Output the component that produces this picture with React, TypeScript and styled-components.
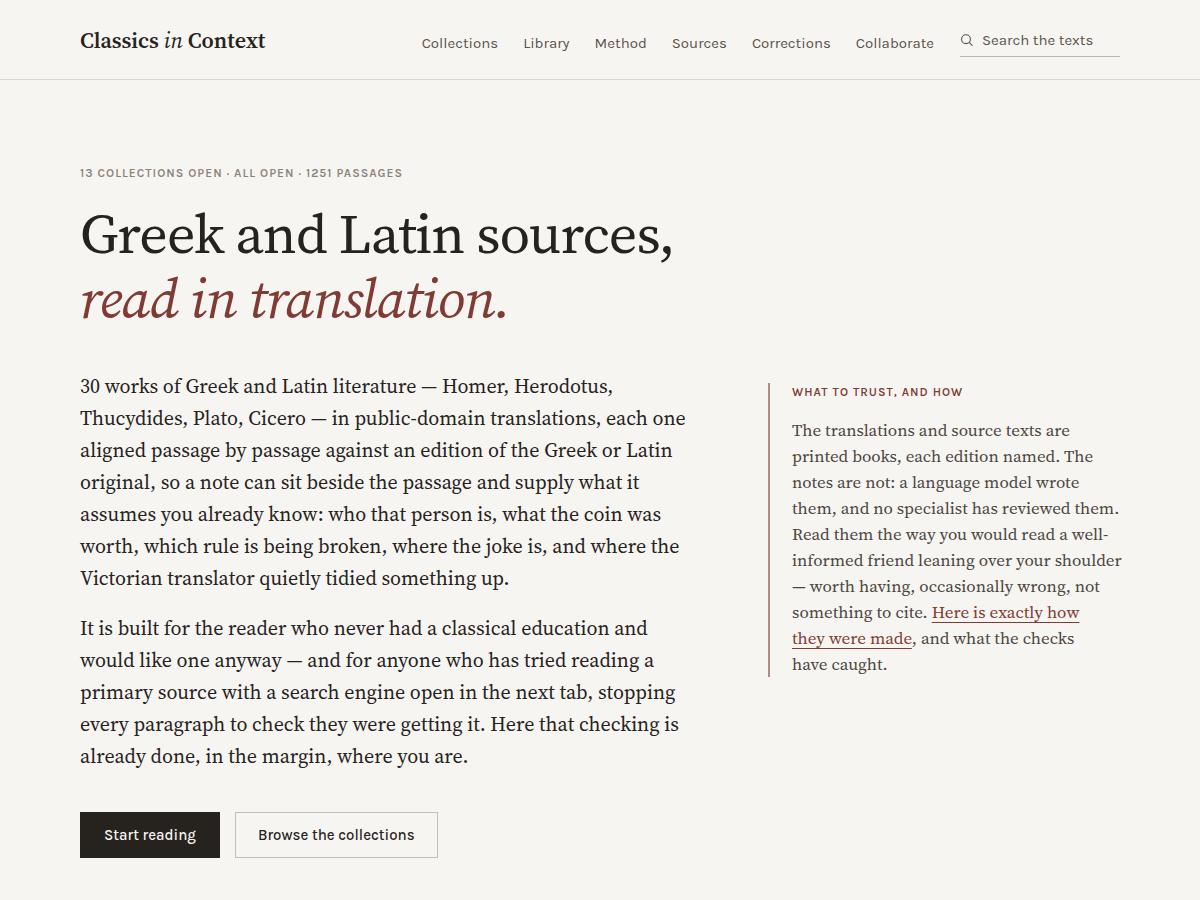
import React from "react";
import styled, { createGlobalStyle } from "styled-components";

const serif = '"Source Serif 4", "Liberation Serif", serif';
const sans = 'Karla, "Liberation Sans", sans-serif';

const ink = "#26221d";
const muted = "#5a534c";
const accent = "#7f3b34";
const paper = "#f7f5f1";

const GlobalStyle = createGlobalStyle`
  *, *::before, *::after { box-sizing: border-box; }
  body {
    margin: 0;
    background: ${paper};
    color: ${ink};
    font-family: ${serif};
  }
`;

const Header = styled.header`
  display: flex;
  align-items: center;
  justify-content: space-between;
  gap: 24px;
  padding: 24px 80px 22px;
  border-bottom: 1px solid #d9d5cf;
`;

const Brand = styled.a`
  padding-bottom: 2px;
  color: ${ink};
  font-size: 22px;
  line-height: 30px;
  font-weight: 600;
  text-decoration: none;
  white-space: nowrap;

  em {
    font-weight: 400;
  }
`;

const HeaderTools = styled.div`
  display: flex;
  align-items: center;
  gap: 26px;
`;

const Nav = styled.nav`
  display: flex;
  gap: 25px;
`;

const NavLink = styled.a`
  color: ${muted};
  font-family: ${sans};
  font-size: 15px;
  line-height: 24px;
  padding-top: 4px;
  text-decoration: none;
`;

const Search = styled.label`
  display: flex;
  align-items: center;
  gap: 8px;
  width: 160px;
  height: 33px;
  border-bottom: 1px solid #bdb9b3;
  color: ${muted};
`;

const SearchInput = styled.input`
  flex: 1;
  min-width: 0;
  padding: 0;
  border: 0;
  outline: 0;
  background: transparent;
  color: ${ink};
  font-family: ${sans};
  font-size: 15px;
  line-height: 24px;

  &::placeholder {
    color: ${muted};
    opacity: 1;
  }
`;

const Hero = styled.main`
  padding: 84px 80px 42px;
`;

const Label = styled.p<{ $tone: string }>`
  margin: 0;
  color: ${(p) => p.$tone};
  font-family: ${sans};
  font-size: 12px;
  line-height: 18px;
  font-weight: 600;
  letter-spacing: 1px;
  text-transform: uppercase;
`;

const Title = styled.h1`
  margin: 19px 0 0;
  font-size: 56px;
  line-height: 65px;
  font-weight: 400;
  letter-spacing: -1px;

  em {
    display: block;
    color: ${accent};
  }
`;

const Columns = styled.div`
  display: grid;
  grid-template-columns: minmax(0, 1fr) 352px;
  align-items: start;
  gap: 64px;
  margin-top: 39px;
`;

const Lede = styled.p`
  margin: 0 0 18px;
  font-size: 20px;
  line-height: 32px;
`;

const Actions = styled.div`
  display: flex;
  gap: 15px;
  margin-top: 40px;
`;

const Button = styled.button<{ $primary?: boolean }>`
  min-width: 140px;
  height: 46px;
  padding: 0 22px;
  border: 1px solid ${(p) => (p.$primary ? ink : "#c2beb8")};
  border-radius: 0;
  background: ${(p) => (p.$primary ? ink : "transparent")};
  color: ${(p) => (p.$primary ? paper : ink)};
  font-family: ${sans};
  font-size: 15px;
  line-height: 24px;
  font-weight: 500;
  cursor: pointer;
`;

const Aside = styled.aside`
  margin-top: 13px;
  padding-left: 22px;
  border-left: 2px solid #b48a84;
`;

const Note = styled.p`
  margin: 16px 0 0;
  color: #4b4640;
  font-size: 17px;
  line-height: 26px;
  white-space: nowrap;

  a {
    color: ${accent};
    text-decoration: underline;
    text-decoration-thickness: 1px;
    text-underline-offset: 4px;
    text-decoration-skip-ink: none;
  }
`;

const links = ["Collections", "Library", "Method", "Sources", "Corrections", "Collaborate"];

const SearchIcon = () => (
  <svg width="14" height="14" viewBox="0 0 14 14" fill="none" stroke="currentColor" strokeWidth="1.1" aria-hidden="true">
    <circle cx="6" cy="6.2" r="4.4" />
    <path d="M9.2 9.4L12.2 12.4" strokeLinecap="round" />
  </svg>
);

export default function App() {
  return (
    <>
      <GlobalStyle />
      <Header>
        <Brand href="#">
          Classics <em>in</em> Context
        </Brand>
        <HeaderTools>
          <Nav>
            {links.map((name) => (
              <NavLink key={name} href={`#${name.toLowerCase()}`}>
                {name}
              </NavLink>
            ))}
          </Nav>
          <Search>
            <SearchIcon />
            <SearchInput type="search" placeholder="Search the texts" aria-label="Search the texts" />
          </Search>
        </HeaderTools>
      </Header>
      <Hero>
        <Label $tone="#8a837a">13 collections open · all open · 1251 passages</Label>
        <Title>
          Greek and Latin sources,
          <em>read in translation.</em>
        </Title>
        <Columns>
          <div>
            <Lede>
              30 works of Greek and Latin literature — Homer, Herodotus, Thucydides, Plato, Cicero — in
              public-domain translations, each one aligned passage by passage against an edition of the
              Greek or Latin original, so a note can sit beside the passage and supply what it assumes you
              already know: who that person is, what the coin was worth, which rule is being broken, where
              the joke is, and where the Victorian translator quietly tidied something up.
            </Lede>
            <Lede>
              It is built for the reader who never had a classical education and would like one anyway —
              and for anyone who has tried reading a primary source with a search engine open in the next
              tab, stopping every paragraph to check they were getting it. Here that checking is already
              done, in the margin, where you are.
            </Lede>
            <Actions>
              <Button $primary>Start reading</Button>
              <Button>Browse the collections</Button>
            </Actions>
          </div>
          <Aside>
            <Label as="h2" $tone={accent}>
              What to trust, and how
            </Label>
            <Note>
              The translations and source texts are
              <br />
              printed books, each edition named. The
              <br />
              notes are not: a language model wrote
              <br />
              them, and no specialist has reviewed them.
              <br />
              Read them the way you would read a well-
              <br />
              informed friend leaning over your shoulder
              <br />
              — worth having, occasionally wrong, not
              <br />
              something to cite.{" "}
              <a href="#method">
                Here is exactly how
                <br />
                they were made
              </a>
              , and what the checks
              <br />
              have caught.
            </Note>
          </Aside>
        </Columns>
      </Hero>
    </>
  );
}
